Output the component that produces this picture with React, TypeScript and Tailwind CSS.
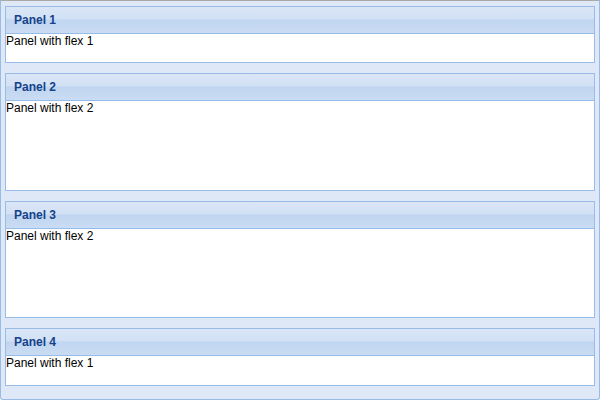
const panels = [
  { title: 'Panel 1', text: 'Panel with flex 1', h: 'h-[57px]' },
  { title: 'Panel 2', text: 'Panel with flex 2', h: 'h-[118px]' },
  { title: 'Panel 3', text: 'Panel with flex 2', h: 'h-[117px]' },
  { title: 'Panel 4', text: 'Panel with flex 1', h: 'h-[58px]' },
];

function Panel({ title, text, h }: { title: string; text: string; h: string }) {
  return (
    <div className={`${h} flex flex-col border border-[#99bbe8] bg-white`}>
      <div className="h-[27px] shrink-0 border-b border-[#99bbe8] bg-[linear-gradient(to_bottom,#dae6f6_0%,#d2e1f5_45%,#c0d5f0_50%,#c9dcf3_100%)] flex items-center pl-[8px]">
        <span className="text-[12px] font-bold text-[#15428b] leading-none">{title}</span>
      </div>
      <div className="flex-1 text-[12px] leading-[15px] text-black">{text}</div>
    </div>
  );
}

export default function App() {
  return (
    <div className="w-[612px] h-[414px] bg-white font-['Liberation_Sans',Arial,sans-serif]">
      <div className="w-[600px] h-[400px] bg-[#dfe8f6] border border-[#99bbe8] border-t-[#a8a8a8] rounded-b-[3px] pt-[5px] px-[4px] flex flex-col gap-[10px]">
        {panels.map((p) => (
          <Panel key={p.title} {...p} />
        ))}
      </div>
    </div>
  );
}
